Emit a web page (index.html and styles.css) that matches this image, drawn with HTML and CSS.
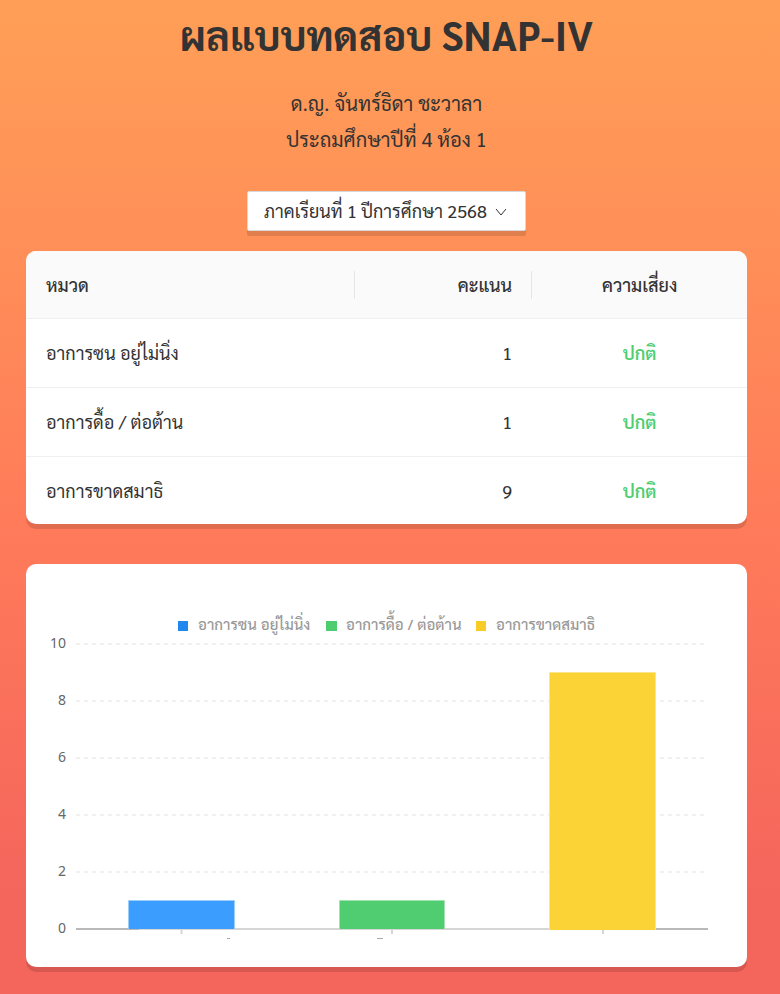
FILE: index.html
```html
<!DOCTYPE html>
<html lang="th">
<head>
<meta charset="utf-8">
<meta name="viewport" content="width=device-width, initial-scale=1">
<title>ผลแบบทดสอบ SNAP-IV</title>
<link rel="stylesheet" href="styles.css">
</head>
<body>
<main class="page">
  <header class="heading">
    <h1 class="title">ผลแบบทดสอบ SNAP-IV</h1>
    <p class="student">ด.ญ. จันทร์ธิดา ชะวาลา</p>
    <p class="student">ประถมศึกษาปีที่ 4 ห้อง 1</p>
  </header>

  <div class="term">
    <select class="term-select" aria-label="ภาคเรียน">
      <option>ภาคเรียนที่ 1 ปีการศึกษา 2568</option>
    </select>
    <svg class="term-arrow" viewBox="0 0 12 12" aria-hidden="true"><path d="M1 3 6 9 11 3"/></svg>
  </div>

  <section class="card">
    <table class="scores">
      <thead>
        <tr><th class="topic">หมวด</th><th class="score">คะแนน</th><th class="risk">ความเสี่ยง</th></tr>
      </thead>
      <tbody>
        <tr><td>อาการซน อยู่ไม่นิ่ง</td><td class="score">1</td><td class="risk normal">ปกติ</td></tr>
        <tr><td>อาการดื้อ / ต่อต้าน</td><td class="score">1</td><td class="risk normal">ปกติ</td></tr>
        <tr><td>อาการขาดสมาธิ</td><td class="score">9</td><td class="risk normal">ปกติ</td></tr>
      </tbody>
    </table>
  </section>

  <section class="card">
    <svg class="chart" viewBox="0 0 721 403">
      <g>
        <rect x="152" y="57" width="10" height="10" fill="#1e88ee"/>
        <rect x="300" y="57" width="11" height="10" fill="#4fcb70"/>
        <rect x="450" y="57" width="10" height="10" fill="#f8cb27"/>
      </g>
      <g class="legend">
        <text x="172" y="66">อาการซน อยู่ไม่นิ่ง</text>
        <text x="320" y="66">อาการดื้อ / ต่อต้าน</text>
        <text x="470" y="66">อาการขาดสมาธิ</text>
      </g>
      <path class="gridline" d="M50 80H682M50 137H682M50 194H682M50 251H682M50 308H682"/>
      <g class="scale">
        <text x="40" y="84">10</text>
        <text x="40" y="141">8</text>
        <text x="40" y="198">6</text>
        <text x="40" y="255">4</text>
        <text x="40" y="312">2</text>
        <text x="40" y="369">0</text>
      </g>
      <path d="M113 365H619" stroke="#d6d6d6" stroke-width="2"/>
      <path d="M50 365H113M619 365H682" stroke="#b9b9b9" stroke-width="2"/>
      <path d="M155.500 366V370M366 366V370M577 366V370" stroke="#d6d6d6" stroke-width="2"/>
      <path d="M102.500 365V336.500H208.500V365" fill="#3b9eff" stroke="#9bcffa"/>
      <path d="M313.500 365V336.500H418.500V365" fill="#50cd70" stroke="#a0e3b0"/>
      <path d="M523.500 366V108.500H629.500V366" fill="#fbd337" stroke="#fce68b"/>
      <path d="M201 374.500H204M351 374.500H357" stroke="#aaa"/>
    </svg>
  </section>
</main>
</body>
</html>
```
FILE: styles.css
```css
* { box-sizing: border-box; }

body {
  margin: 0;
  min-height: 100vh;
  background: linear-gradient(180deg, #ff9f57 0%, #ff8f58 25%, #ff7a5a 54%, #f4655c 90%, #f4655c 100%);
  color: #333;
  font-family: "Sarabun", Lato, sans-serif;
}

.page {
  display: flex;
  flex-direction: column;
  align-items: center;
  padding: 8px 33px 27px 26px;
}

.heading { text-align: center; }

.title {
  margin: 0 0 25px;
  font-size: 40px;
  line-height: 52px;
  font-weight: 700;
}

.student {
  margin: 0;
  font-size: 20px;
  line-height: 36px;
}

.term {
  position: relative;
  margin: 34px 0 20px;
}

.term-select {
  display: block;
  height: 40px;
  padding: 0 38px 0 16px;
  border: 1px solid #d9d9d9;
  border-radius: 2px;
  background: #fff;
  box-shadow: 0 5px 0 rgba(0, 0, 0, .12);
  color: #333;
  font-family: inherit;
  font-size: 18px;
  line-height: 38px;
  appearance: none;
}

.term-arrow {
  position: absolute;
  top: 15px;
  right: 19px;
  width: 12px;
  height: 12px;
  fill: none;
  stroke: #333;
  pointer-events: none;
}

.card {
  width: 100%;
  margin-bottom: 40px;
  border-radius: 10px;
  background: #fff;
  box-shadow: 0 5px 0 rgba(0, 0, 0, .12);
  overflow: hidden;
}

.card:last-child { margin-bottom: 0; }

.scores {
  width: 100%;
  border-collapse: separate;
  border-spacing: 0;
  table-layout: fixed;
  font-size: 18px;
  line-height: 28px;
}

.scores th,
.scores td {
  padding: 20px;
  border-bottom: 1px solid #f0f0f0;
  text-align: left;
}

.scores th {
  position: relative;
  padding-bottom: 19px;
  background: #fafafa;
  font-weight: 500;
}

.scores th:not(:last-child)::after {
  content: "";
  position: absolute;
  top: 20px;
  right: 0;
  width: 1px;
  height: 28px;
  background: #e6e6e6;
}

.scores tbody tr:last-child td {
  padding-bottom: 19px;
  border-bottom: 0;
}

.scores .topic { width: 45.6%; }
.scores th.score { width: 24.6%; }
.scores .score { text-align: right; }
.scores .risk { text-align: center; }
.scores .normal { color: #50cd70; font-weight: 600; }

.chart {
  display: block;
  width: 100%;
  height: auto;
  font-family: "Noto Sans", "Sarabun", sans-serif;
}

.gridline {
  stroke: #f0f0f0;
  stroke-width: 2;
  stroke-dasharray: 4 4;
}

.legend {
  fill: #999;
  font-size: 15px;
  font-weight: 500;
}

.scale {
  fill: #666;
  font-size: 14px;
  text-anchor: end;
}
```
